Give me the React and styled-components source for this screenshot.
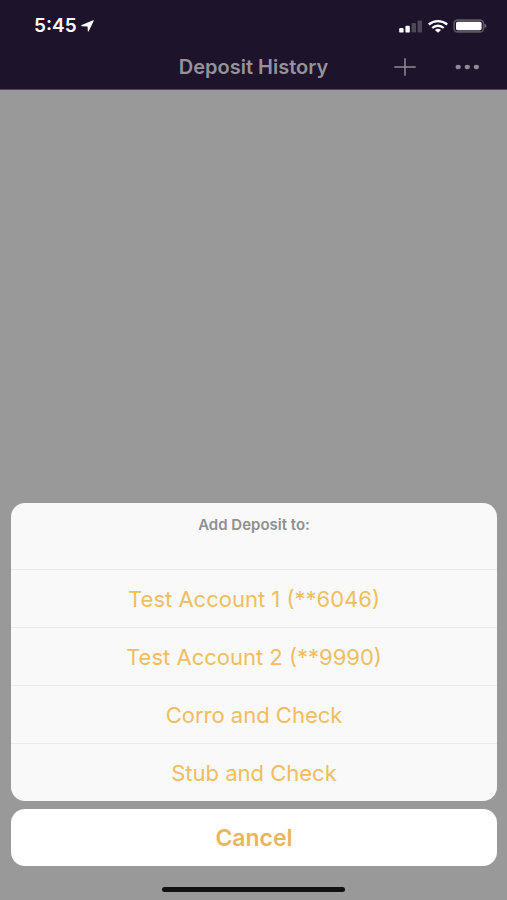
import React, { Component } from 'react';
import styled, { createGlobalStyle } from 'styled-components';

const GlobalStyle = createGlobalStyle`
    * {
        box-sizing: border-box;
    }

    body {
        margin: 0;
        background: #999999;
        font-family: Inter, "Liberation Sans", sans-serif;
    }

    button {
        border: 0;
        padding: 0;
        background: none;
        font-family: inherit;
        cursor: pointer;
    }
`;

const Screen = styled.div`
    display: flex;
    flex-direction: column;
    min-height: 100vh;
    background: #999999;
`;

const Header = styled.header`
    background: #1d132b;
    border-bottom: 1px solid #4c4656;
`;

const StatusBar = styled.div`
    display: flex;
    justify-content: space-between;
    align-items: center;
    height: 44px;
    padding: 8px 20px 0 34px;
    color: #ffffff;
`;

const Time = styled.div`
    display: flex;
    align-items: center;
    gap: 4px;
    font-size: 19px;
    font-weight: 600;
    line-height: 20px;
`;

const Indicators = styled.div`
    display: flex;
    align-items: center;
    gap: 5px;
`;

const NavBar = styled.nav`
    display: grid;
    grid-template-columns: 1fr auto 1fr;
    align-items: center;
    height: 45px;
`;

const Title = styled.h1`
    grid-column: 2;
    margin: 0;
    color: #96929c;
    font-size: 20px;
    font-weight: 600;
    line-height: 24px;
`;

const Actions = styled.div`
    display: flex;
    justify-content: flex-end;
    gap: 39px;
    padding-right: 27px;
`;

const IconButton = styled.button`
    display: flex;
    align-items: center;
    height: 24px;
    color: #8f8a96;
`;

const Content = styled.main`
    flex: 1;
`;

const Sheet = styled.div`
    display: flex;
    flex-direction: column;
    gap: 8px;
    padding: 0 10px 0 11px;
`;

const Options = styled.section`
    overflow: hidden;
    border-radius: 14px;
    background: #f9f9f9;
`;

const SheetTitle = styled.h2`
    height: 66px;
    margin: 0;
    padding-top: 14px;
    color: #8f8f8f;
    font-size: 15px;
    font-weight: 600;
    line-height: 16px;
    text-align: center;
`;

const Option = styled.button`
    display: block;
    width: 100%;
    height: 58px;
    color: #f0bd62;
    font-size: 22px;
    line-height: 24px;

    && {
        border-top: 1px solid #ebebeb;
    }
`;

const Cancel = styled.button`
    height: 57px;
    border-radius: 14px;
    color: #e9b65b;
    font-size: 23px;
    font-weight: 600;
    line-height: 24px;

    && {
        background: #ffffff;
    }
`;

const HomeBar = styled.div`
    width: 36%;
    height: 5px;
    margin: 21px auto 8px;
    border-radius: 3px;
    background: #111111;
`;

const accounts = [
    'Test Account 1 (**6046)',
    'Test Account 2 (**9990)',
    'Corro and Check',
    'Stub and Check'
];

const Arrow = () => (
    <svg width="13" height="12" viewBox="0 0 13 12" fill="currentColor" aria-hidden="true">
        <path d="M12.2 0.2 Q13.1 0 12.7 0.9 L7.7 11.3 Q7 12.2 6.8 11.1 L6.6 6.4 L0.9 6.2 Q-0.4 5.8 0.7 5.1 Z" />
    </svg>
);

const Signal = () => (
    <svg width="24" height="13" viewBox="0 0 24 13" fill="currentColor" role="img" aria-label="Signal">
        <rect x="0.2" y="8" width="4.4" height="4.6" rx="1.2" />
        <rect x="6.4" y="5.8" width="4.4" height="6.8" rx="1.2" />
        <rect x="12.6" y="3" width="4.4" height="9.6" rx="1.2" opacity="0.22" />
        <rect x="18.6" y="0.4" width="4.4" height="12.2" rx="1.2" opacity="0.22" />
    </svg>
);

const Wifi = () => (
    <svg width="20" height="13" viewBox="0 0 20 13" fill="none" stroke="currentColor" strokeWidth="2.3" role="img" aria-label="Wi-Fi">
        <path d="M0.8 4.5 C6 0.1 14 0.1 19.2 4.5" />
        <path d="M4.2 8 C7.5 5 12.5 5 15.8 8" />
        <path d="M6.9 9.9 Q10 7.7 13.1 9.9 L10 12.7 Z" fill="currentColor" stroke="none" />
    </svg>
);

const Battery = () => (
    <svg width="34" height="14" viewBox="0 0 34 14" role="img" aria-label="Battery">
        <rect x="1.1" y="1.1" width="29.4" height="11.8" rx="3.4" fill="none" stroke="#5d5665" strokeWidth="1.6" />
        <rect x="3" y="2.8" width="25.6" height="8.4" rx="1.6" fill="#ffffff" />
        <path d="M31.6 4.8 Q33.4 5.4 33.4 7 Q33.4 8.6 31.6 9.2 Z" fill="#77717e" />
    </svg>
);

const Plus = () => (
    <svg width="22" height="18" viewBox="0 0 22 18" fill="none" stroke="currentColor" strokeWidth="1.5" aria-hidden="true">
        <path d="M0.3 9 H21.7 M11 0.2 V17.8" />
    </svg>
);

const Dots = () => (
    <svg width="25" height="6" viewBox="0 0 25 6" fill="currentColor" aria-hidden="true">
        <ellipse cx="3.2" cy="3" rx="2.6" ry="2.3" />
        <ellipse cx="12.3" cy="3" rx="2.6" ry="2.3" />
        <ellipse cx="21.4" cy="3" rx="2.6" ry="2.3" />
    </svg>
);

export default class App extends Component {
    render() {
        return (
            <Screen>
                <GlobalStyle />
                <Header>
                    <StatusBar>
                        <Time>5:45 <Arrow /></Time>
                        <Indicators>
                            <Signal />
                            <Wifi />
                            <Battery />
                        </Indicators>
                    </StatusBar>
                    <NavBar>
                        <Title>Deposit History</Title>
                        <Actions>
                            <IconButton type="button" aria-label="Add deposit"><Plus /></IconButton>
                            <IconButton type="button" aria-label="More"><Dots /></IconButton>
                        </Actions>
                    </NavBar>
                </Header>
                <Content />
                <Sheet role="dialog" aria-labelledby="sheet-title">
                    <Options>
                        <SheetTitle id="sheet-title">Add Deposit to:</SheetTitle>
                        {accounts.map(name => (
                            <Option type="button" key={name}>{name}</Option>
                        ))}
                    </Options>
                    <Cancel type="button">Cancel</Cancel>
                </Sheet>
                <HomeBar />
            </Screen>
        )
    }
}
